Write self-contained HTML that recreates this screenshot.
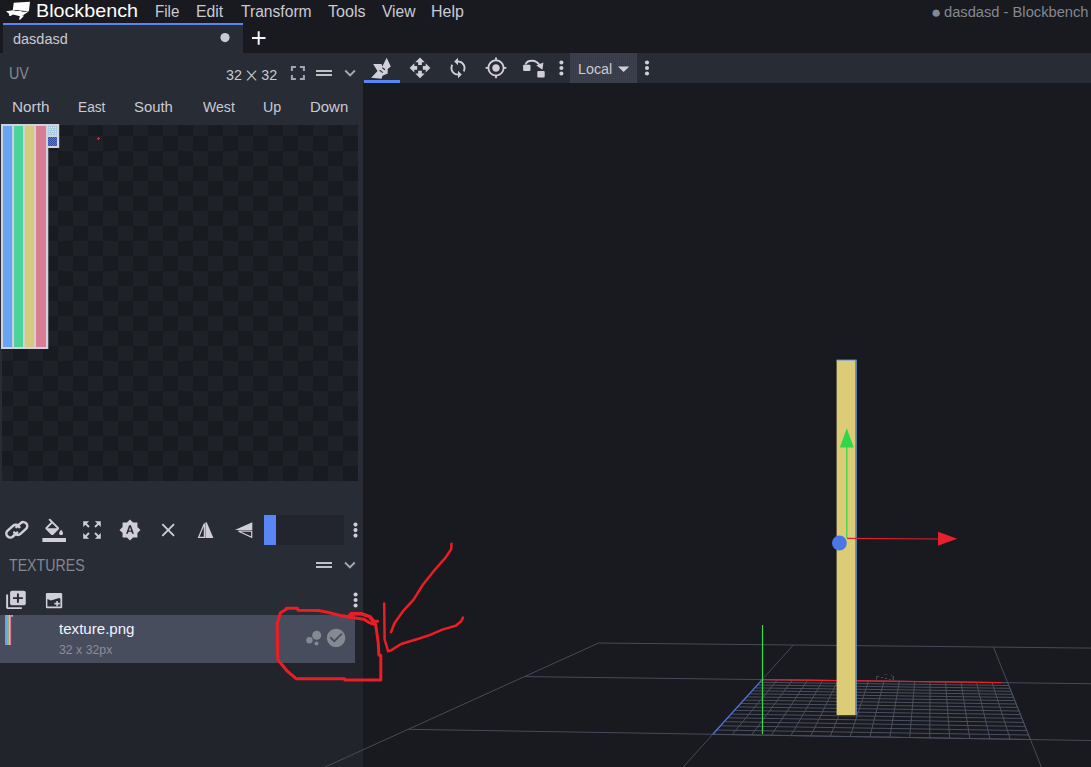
<!DOCTYPE html>
<html><head><meta charset="utf-8"><title>dasdasd - Blockbench</title>
<style>
html,body{margin:0;padding:0}
body{width:1091px;height:767px;overflow:hidden;background:#191a1f;font-family:"Liberation Sans",sans-serif;position:relative}
.a{position:absolute}
.mx{font-family:"DejaVu Math TeX Gyre","DejaVu Sans",sans-serif;font-size:.8em;position:relative;top:-.6px}
.t{position:absolute;white-space:nowrap;line-height:1;transform-origin:0 0}
#tab{left:3px;top:23px;width:240px;height:30px;background:#282c34;border-top:2px solid #5a86f5;box-sizing:border-box}
#left{left:0;top:53px;width:363px;height:714px;background:#282c34}
#tbar{left:363px;top:53px;width:728px;height:30px;background:#282c34}
#uv{left:2px;top:125px;width:356px;height:356px;background-color:#181b20;background-image:conic-gradient(#181b20 25%,#1e2128 0 50%,#181b20 0 75%,#1e2128 0);background-size:30px 30px;background-position:11px -4px;overflow:hidden}
#slider{left:264px;top:515px;width:80px;height:30px;background:#22252d}
#slider i{display:block;width:12px;height:30px;background:#5a86f5}
#texlist{left:0;top:615px;width:363px;height:152px;background:#21252b}
#texitem{left:0;top:615px;width:355px;height:48px;background:#474d5d}
#localbtn{left:570px;top:53px;width:67px;height:30px;background-color:#3c404c;background-image:conic-gradient(#343844 25%,#3c404c 0);background-size:2px 2px}
#toolsel{left:364px;top:80px;width:36px;height:3px;background:#5a86f5}
svg{position:absolute;left:0;top:0}
</style></head>
<body>
<div class="a" id="tab"></div>
<div class="a" id="left"></div>
<div class="a" id="tbar"></div>
<div class="a" id="toolsel"></div>
<div class="a" id="localbtn"></div>
<div class="a" id="uv"></div>
<div class="a" id="slider"><i></i></div>
<div class="a" id="texlist"></div>
<div class="a" id="texitem"></div>
<div class="t" style="left:36.0px;top:2.34px;font-size:18.5px;color:#ffffff;font-weight:400;transform:scaleX(1.0663)">Blockbench</div>
<div class="t" style="left:154.8px;top:4.46px;font-size:16px;color:#cacad4;font-weight:400;transform:scaleX(0.9465)">File</div>
<div class="t" style="left:195.8px;top:4.46px;font-size:16px;color:#cacad4;font-weight:400;transform:scaleX(0.9862)">Edit</div>
<div class="t" style="left:240.6px;top:4.46px;font-size:16px;color:#cacad4;font-weight:400;transform:scaleX(0.9764)">Transform</div>
<div class="t" style="left:328.0px;top:4.46px;font-size:16px;color:#cacad4;font-weight:400;transform:scaleX(1.0064)">Tools</div>
<div class="t" style="left:381.5px;top:4.46px;font-size:16px;color:#cacad4;font-weight:400;transform:scaleX(0.9741)">View</div>
<div class="t" style="left:430.5px;top:4.46px;font-size:16px;color:#cacad4;font-weight:400;transform:scaleX(0.9967)">Help</div>
<div class="t" style="left:931.0px;top:3.61px;font-size:17px;color:#848891;font-weight:400;transform:scaleX(0.9922)">●</div>
<div class="t" style="left:944.3px;top:3.88px;font-size:15.5px;color:#848891;font-weight:400;transform:scaleX(0.9474)">dasdasd - Blockbench</div>
<div class="t" style="left:13.0px;top:31.05px;font-size:15.3px;color:#cacad4;font-weight:400;transform:scaleX(0.9474)">dasdasd</div>
<div class="t" style="left:9.0px;top:66.46px;font-size:16px;color:#848891;font-weight:400;transform:scaleX(0.8952)">UV</div>
<div class="t" style="left:226.3px;top:66.88px;font-size:15.5px;color:#cacad4;font-weight:400;transform:scaleX(0.9207)">32 <span class="mx">⨉</span> 32</div>
<div class="t" style="left:11.9px;top:99.13px;font-size:15.2px;color:#cacad4;font-weight:400;transform:scaleX(1.0070)">North</div>
<div class="t" style="left:77.6px;top:99.13px;font-size:15.2px;color:#cacad4;font-weight:400;transform:scaleX(0.9016)">East</div>
<div class="t" style="left:134.3px;top:99.13px;font-size:15.2px;color:#cacad4;font-weight:400;transform:scaleX(0.9798)">South</div>
<div class="t" style="left:202.6px;top:99.13px;font-size:15.2px;color:#cacad4;font-weight:400;transform:scaleX(0.9263)">West</div>
<div class="t" style="left:262.8px;top:99.13px;font-size:15.2px;color:#cacad4;font-weight:400;transform:scaleX(0.9372)">Up</div>
<div class="t" style="left:310.2px;top:99.13px;font-size:15.2px;color:#cacad4;font-weight:400;transform:scaleX(0.9835)">Down</div>
<div class="t" style="left:9.3px;top:557.03px;font-size:16.5px;color:#848891;font-weight:400;transform:scaleX(0.8589)">TEXTURES</div>
<div class="t" style="left:59.3px;top:620.88px;font-size:15.5px;color:#f4f3ff;font-weight:400;transform:scaleX(0.9734)">texture.png</div>
<div class="t" style="left:59.0px;top:643.00px;font-size:13px;color:#8a8e99;font-weight:400;transform:scaleX(0.9454)">32 x 32px</div>
<div class="t" style="left:577.8px;top:61.13px;font-size:15.2px;color:#cacad4;font-weight:400;transform:scaleX(0.9419)">Local</div>
<svg width="1091" height="767" viewBox="0 0 1091 767">
<circle cx="225" cy="37.6" r="4.6" fill="#cacad4"/>
<path d="M252 38H265.5M258.7 31.3V44.8" stroke="#f4f3ff" stroke-width="2" fill="none"/>
<g fill="#fff"><path d="M13.7 2.7L30 1.8L28.9 11.2L12.8 10.1Z"/><path d="M6 11.3L13 10.2L28.7 11.4L21 16.4L13 14.4L9.6 14.2Z"/><path d="M9.4 13.6L13.4 14.4L10.2 16L8.8 15.4Z"/><path d="M20 15.8L24.2 15.6L20.2 19.8L19 19.4Z"/></g>
<path d="M14.5 10.6L19.5 10.5M21.5 11.5L26.5 11.4" stroke="#1a1b20" stroke-width="0.7"/>
<path d="M7 14H5v5h5v-2H7v-3zm-2-4h2V7h3V5H5v5zm12 7h-3v2h5v-5h-2v3zM14 5v2h3v3h2V5h-5z" fill="#a0a7b8" transform="translate(285.90 61.00) scale(1.0000)"/>
<path d="M20 9H4v2h16V9zM4 15h16v-2H4v2z" fill="#bfc0ca" transform="translate(312.00 61.00) scale(1.0000)"/>
<path d="M16.59 8.59L12 13.17 7.41 8.59 6 10l6 6 6-6z" fill="#a6a9b4" transform="translate(339.10 62.00) scale(0.9167)"/>
<path d="M10 9h4V6h3l-5-5-5 5h3v3zm-1 1H6V7l-5 5 5 5v-3h3v-4zm14 2l-5-5v3h-3v4h3v3l5-5zm-9 3h-4v3H7l5 5 5-5h-3v-3z" fill="#d0cfd9" transform="translate(408.70 56.60) scale(0.9417)"/>
<path d="M12 4V1L8 5l4 4V6c3.31 0 6 2.69 6 6 0 1.01-.25 1.97-.7 2.8l1.46 1.46C19.54 15.03 20 13.57 20 12c0-4.42-3.58-8-8-8zm0 14c-3.31 0-6-2.69-6-6 0-1.01.25-1.97.7-2.8L5.24 7.74C4.46 8.97 4 10.43 4 12c0 4.42 3.58 8 8 8v3l4-4-4-4v3z" fill="#d0cfd9" transform="translate(446.75 56.75) scale(0.9375)"/>
<path d="M12 8c-2.21 0-4 1.79-4 4s1.79 4 4 4 4-1.79 4-4-1.79-4-4-4zm8.94 3c-.46-4.17-3.77-7.48-7.94-7.94V1h-2v2.06C6.83 3.52 3.52 6.83 3.06 11H1v2h2.06c.46 4.17 3.77 7.48 7.94 7.94V23h2v-2.06c4.17-.46 7.48-3.77 7.94-7.94H23v-2h-2.06zM12 19c-3.87 0-7-3.13-7-7s3.13-7 7-7 7 3.13 7 7-3.13 7-7 7z" fill="#d0cfd9" transform="translate(484.70 56.60) scale(0.9417)"/>
<circle cx="561.4" cy="62.5" r="2.05" fill="#d0cfd9"/><circle cx="561.4" cy="68" r="2.05" fill="#d0cfd9"/><circle cx="561.4" cy="73.5" r="2.05" fill="#d0cfd9"/>
<circle cx="647" cy="62.5" r="2.05" fill="#d0cfd9"/><circle cx="647" cy="68" r="2.05" fill="#d0cfd9"/><circle cx="647" cy="73.5" r="2.05" fill="#d0cfd9"/>
<path d="M617.9 66.4H629.3L623.6 72.1Z" fill="#d0cfd9"/>
<path d="M386.65 57.8L390.8 66.6L387.7 68.9L387.7 73.4L382.5 75.8L381.5 78.8L371.2 77.8L377.5 71L373.1 64.1L381.6 64.1L382.3 66.6Z" fill="#d0cfd9"/><path d="M379.6 70.3L382.9 72.6M382.3 67.8L385 69.7" stroke="#282c34" stroke-width="1.1" fill="none"/>
<g fill="#d0cfd9"><rect x="523.1" y="64.7" width="7.4" height="6.4" rx="1"/><rect x="537.3" y="71.1" width="7.4" height="6.4" rx="1"/><path d="M543.4 62.6L542.5 69.8L536.3 65.6Z"/></g><path d="M525.6 64.4C527 60 536 58.5 540.2 66" fill="none" stroke="#d0cfd9" stroke-width="1.8"/>
<g fill="none" stroke="#d0cfd9" stroke-width="2.5" stroke-linecap="round"><path d="M2.2 3.9L-3.7 3.9A3.9 3.9 0 0 1 -3.7 -3.9L3.7 -3.9A3.9 3.9 0 0 1 7.36 1.33" transform="translate(13.0 531.1) rotate(-42)"/><path d="M-2.2 -3.9L3.7 -3.9A3.9 3.9 0 0 1 3.7 3.9L-3.7 3.9A3.9 3.9 0 0 1 -7.36 -1.33" transform="translate(20.6 528.5) rotate(-42)"/></g>
<path d="M16.56 8.94L7.62 0 6.21 1.41l2.38 2.38-5.15 5.15c-.59.59-.59 1.54 0 2.12l5.5 5.5c.29.29.68.44 1.06.44s.77-.15 1.06-.44l5.5-5.5c.59-.58.59-1.53 0-2.12zM5.21 10L10 5.21 14.79 10H5.21zM19 11.5s-2 2.17-2 3.5c0 1.1.9 2 2 2s2-.9 2-2c0-1.33-2-3.5-2-3.5zM0 20h24v4H0z" fill="#d0cfd9" transform="translate(42.40 518.40) scale(0.9833)"/>
<path d="M15 3l2.3 2.3-2.89 2.87 1.42 1.42L18.7 6.7 21 9V3h-6zM3 9l2.3-2.3 2.87 2.89 1.42-1.42L6.7 5.3 9 3H3v6zm6 12l-2.3-2.3 2.89-2.87-1.42-1.42L5.3 17.3 3 15v6h6zm12-6l-2.3 2.3-2.87-2.89-1.42 1.42 2.89 2.87L15 21h6v-6z" fill="#d0cfd9" transform="translate(80.30 518.30) scale(0.9750)"/>
<path d="M10.85 12.65h2.3L12 9l-1.15 3.65zM20 8.69V4h-4.69L12 .69 8.69 4H4v4.69L.69 12 4 15.31V20h4.69L12 23.31 15.31 20H20v-4.69L23.31 12 20 8.69zM14.3 16l-.7-2h-3.2l-.7 2H7.8L11 7h2l3.2 9h-1.9z" fill="#d0cfd9" transform="translate(118.85 518.85) scale(0.9292)"/>
<path d="M19 6.41L17.59 5 12 10.59 6.41 5 5 6.41 10.59 12 5 17.59 6.41 19 12 13.41 17.59 19 19 17.59 13.41 12z" fill="#d0cfd9" transform="translate(157.05 518.85) scale(0.9292)"/>
<path d="M205.4 522.2H206.7L213.4 538H205.4Z" fill="#d0cfd9"/><path d="M204.4 523.5L198.6 537.4H204.4Z" fill="none" stroke="#d0cfd9" stroke-width="1.2"/>
<path d="M252.3 522.2V530H234.8Z" fill="#d0cfd9"/><path d="M251.7 531.2V537.2L238.5 531.2Z" fill="none" stroke="#d0cfd9" stroke-width="1.2"/>
<circle cx="355.5" cy="524.6" r="2.05" fill="#d0cfd9"/><circle cx="355.5" cy="530.1" r="2.05" fill="#d0cfd9"/><circle cx="355.5" cy="535.6" r="2.05" fill="#d0cfd9"/>
<path d="M20 9H4v2h16V9zM4 15h16v-2H4v2z" fill="#bfc0ca" transform="translate(312.00 553.00) scale(1.0000)"/>
<path d="M16.59 8.59L12 13.17 7.41 8.59 6 10l6 6 6-6z" fill="#a6a9b4" transform="translate(338.90 554.00) scale(0.9167)"/>
<path d="M4 6H2v14c0 1.1.9 2 2 2h14v-2H4V6zm16-4H8c-1.1 0-2 .9-2 2v12c0 1.1.9 2 2 2h12c1.1 0 2-.9 2-2V4c0-1.1-.9-2-2-2zm-1 9h-4v4h-2v-4H9V9h4V5h2v4h4v2z" fill="#d0cfd9" transform="translate(4.2 588.9) scale(0.98 0.915)"/>
<rect x="45.9" y="592.9" width="16.3" height="15.3" rx="1.2" fill="#d0cfd9"/><path d="M47.4 599.1L50.9 600.6L59.1 598.1L60.4 598.7V606.6H47.4Z" fill="#282c34"/><path d="M54.4 603.6H59.8M57.1 600.9V606.3" stroke="#d0cfd9" stroke-width="1.6" fill="none"/>
<circle cx="355.6" cy="594.5" r="2.05" fill="#d0cfd9"/><circle cx="355.6" cy="600" r="2.05" fill="#d0cfd9"/><circle cx="355.6" cy="605.5" r="2.05" fill="#d0cfd9"/>
<g fill="#868993"><circle cx="316.7" cy="635.2" r="4.5"/><circle cx="309.5" cy="640.2" r="3.2"/><circle cx="316.5" cy="643.5" r="2"/></g>
<path d="M12 2C6.48 2 2 6.48 2 12s4.48 10 10 10 10-4.48 10-10S17.52 2 12 2zm-2 15l-5-5 1.41-1.41L10 14.17l7.59-7.59L19 8l-9 9z" fill="#868993" transform="translate(325.10 626.90) scale(0.9167)"/>
<g><rect x="5" y="615" width="1.9" height="30" fill="#68a5f4"/><rect x="6.9" y="615" width="1.5" height="30" fill="#4cd39b"/><rect x="8.4" y="615" width="1.6" height="30" fill="#d6c97f"/><rect x="10" y="615" width="1.1" height="30" fill="#d87d98"/><rect x="11.3" y="615.2" width="1.6" height="1.6" fill="#d7d6e0"/><rect x="11.3" y="616.8" width="1.6" height="1.5" fill="#3f4f86"/></g>
<g><rect x="1" y="124" width="47.3" height="225" fill="#d3d1dc"/><rect x="46" y="124" width="13.2" height="24" fill="#d3d1dc"/><rect x="3" y="126" width="9.1" height="221" fill="#67a4f3"/><rect x="14.1" y="126" width="8.9" height="221" fill="#4bd39a"/><rect x="24.9" y="126" width="9.3" height="221" fill="#d7ca80"/><rect x="36" y="126" width="10" height="221" fill="#d97d97"/><defs><pattern id="dth" x="48" y="137" width="2" height="2" patternUnits="userSpaceOnUse"><rect width="2" height="2" fill="#3351a8"/><rect width="1" height="1" fill="#6f7788"/><rect x="1" y="1" width="1" height="1" fill="#6f7788"/></pattern></defs><rect x="48" y="126" width="9" height="9" fill="#a9cbe4"/><g fill="#dbe7f1"><rect x="49" y="127" width="1" height="1"/><rect x="51" y="127" width="1" height="1"/><rect x="53" y="127" width="1" height="1"/><rect x="55" y="127" width="1" height="1"/><rect x="49" y="129" width="1" height="1"/><rect x="52" y="129" width="1" height="1"/><rect x="55" y="129" width="1" height="1"/><rect x="49" y="131" width="1" height="1"/><rect x="51" y="131" width="1" height="1"/><rect x="53" y="131" width="1" height="1"/><rect x="55" y="131" width="1" height="1"/><rect x="49" y="133" width="1" height="1"/><rect x="52" y="133" width="1" height="1"/><rect x="55" y="133" width="1" height="1"/></g><rect x="48" y="137" width="9" height="9" fill="url(#dth)"/><path d="M97 138.6H100M98.5 137.1V140.1" stroke="#ff1a2a" stroke-width="1"/></g>
<!-- VIEWPORT -->
<g fill="none" stroke-width="1">
<path d="M598.6 643.0L198.9 824.2M793.4 645.0L622.6 834.2M993.4 647.1L1072.5 844.7M1199.0 649.2L1551.3 855.9M598.6 643.0L1199.0 649.2M524.7 676.6L1261.5 685.9M408.4 729.3L1362.2 745.0M198.9 824.2L1551.3 855.9" stroke="#464b59"/>
<path d="M762.2 679.6L712.8 734.3M777.3 679.8L732.2 734.6M792.4 680.0L751.7 734.9M807.6 680.1L771.3 735.3M822.8 680.3L790.9 735.6M838.0 680.5L810.6 735.9M853.3 680.7L830.3 736.2M868.6 680.9L850.1 736.6M883.9 681.1L869.9 736.9M899.3 681.3L889.8 737.2M914.7 681.5L909.7 737.5M930.1 681.7L929.7 737.9M945.5 681.9L949.7 738.2M961.0 682.1L969.8 738.5M976.5 682.3L990.0 738.9M992.1 682.5L1010.2 739.2M1007.7 682.7L1030.4 739.5M762.2 679.6L1007.7 682.7M759.8 682.3L1008.8 685.5M757.3 685.0L1009.9 688.3M754.7 687.9L1011.1 691.3M752.1 690.8L1012.3 694.3M749.3 693.8L1013.6 697.4M746.5 696.9L1014.9 700.6M743.6 700.1L1016.2 704.0M740.6 703.5L1017.6 707.4M737.5 706.9L1019.0 711.0M734.4 710.4L1020.5 714.6M731.1 714.1L1022.0 718.4M727.6 717.8L1023.6 722.4M724.1 721.7L1025.2 726.4M720.5 725.8L1026.9 730.6M716.7 730.0L1028.6 735.0M712.8 734.3L1030.4 739.5" stroke="#4a5060"/>
<path d="M762.2 679.6L1001.4 682.6" stroke="#e8202a" stroke-width="1.3"/>
<path d="M762.2 679.6L712.8 734.3" stroke="#4a6fe0" stroke-width="1.3"/>
<path d="M762.5 625V734" stroke="#2fe04a" stroke-width="1.2"/>
</g>
<rect x="836.6" y="360" width="19.8" height="355" fill="#dccc77"/>
<rect x="855" y="360" width="1.6" height="355" fill="#5b8fe8"/><rect x="836.6" y="359.6" width="20" height="1" fill="#6f9be6"/>
<path d="M846.8 447V538" stroke="#2fd84a" stroke-width="1.2"/><path d="M846.8 428.3L853.8 447.5H839.8Z" fill="#2fd84a"/>
<path d="M847 538.3L938 539" stroke="#e0202c" stroke-width="1.2"/><path d="M957.2 538.8L938 531.8V545.8Z" fill="#e6202c"/>
<circle cx="839.4" cy="543" r="7.4" fill="#4a76e6"/>
<g fill="#4b505d"><rect x="876" y="676.2" width="3" height="0.9"/><rect x="876" y="677" width="0.9" height="2.6"/><rect x="881" y="677" width="2.2" height="0.9"/><rect x="884.2" y="674" width="0.9" height="1"/><rect x="886.3" y="674" width="0.9" height="1"/><rect x="885" y="678" width="2.1" height="0.9"/><rect x="891" y="675" width="1" height="1"/><rect x="892.6" y="676" width="1.3" height="4"/><rect x="889" y="679" width="1.7" height="0.9"/></g>
<g fill="none" stroke="#ee1c24" stroke-width="3" stroke-linejoin="round" stroke-linecap="round"><path d="M286.3 608.3L297.4 608.3L298 610.2L318.2 610.6L327.4 612.2L343 616.1L348.2 616.7L353.5 614.1L361.3 614.1L369.1 616.7L373 621.3L377.6 621.3"/><path d="M348.2 616.7L350.8 613.6L361.3 613.4L370.4 616.7L374.3 621.9"/><path d="M343 616.1L353.5 617.8L363.9 619.3L369.1 622.6L373.6 624.2"/><path d="M375.6 623.9L378.2 642.2L378.9 655.2L380.8 655.2L380.8 680L345 680L344.3 678.7L296.1 678.7L287 670.8L277.8 659.8L277.2 623.9L280.4 612.8L286.3 609.2"/><path d="M451.5 543.7L451.2 549.2L445.7 557.4L433.8 571L422.9 584.7L413.8 599.3L403.7 610.3L394.6 623L391 632.2" stroke-width="2.5"/><path d="M384.2 603.5L384.6 639.5L388.2 651.3L391 650.4L401 644L419.3 638.5L430.2 634.9L443 629.4L455.7 625.8L461.2 621.2L463 617.6" stroke-width="2.5"/></g>
</svg>
</body></html>
